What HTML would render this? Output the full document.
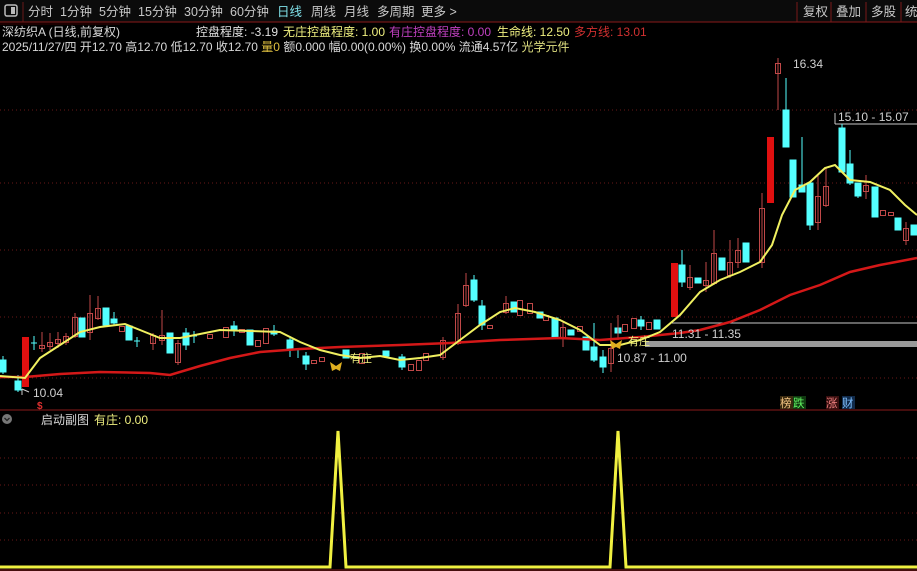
<!DOCTYPE html>
<html><head><meta charset="utf-8"><style>
html,body{margin:0;padding:0;background:#000;width:917px;height:571px;overflow:hidden}
body{font-family:"Liberation Sans","Noto Sans CJK SC",sans-serif}
svg{position:absolute;left:0;top:0}
</style></head><body>
<svg width="917" height="571" viewBox="0 0 917 571" xmlns="http://www.w3.org/2000/svg" font-family="Liberation Sans, Noto Sans CJK SC, sans-serif">
<rect width="917" height="571" fill="#000"/>
<!-- top bar -->
<rect x="0" y="0" width="917" height="22" fill="#0b0b0b"/>
<line x1="0" y1="22" x2="917" y2="22" stroke="#8a1a1a" stroke-width="1"/>
<line x1="23" y1="2" x2="23" y2="22" stroke="#6a1a1a"/>
<rect x="5" y="5" width="12" height="11" rx="2" fill="none" stroke="#bbb" stroke-width="1.5"/>
<rect x="11" y="7" width="4" height="7" fill="#bbb"/>
<g font-size="12.5" fill="#c8c8c8">
<text x="28" y="16">分时</text><text x="60" y="16">1分钟</text><text x="99" y="16">5分钟</text>
<text x="138" y="16">15分钟</text><text x="184" y="16">30分钟</text><text x="230" y="16">60分钟</text>
<text x="277" y="16" fill="#7fe0e8">日线</text><text x="311" y="16">周线</text><text x="344" y="16">月线</text>
<text x="377" y="16">多周期</text><text x="421" y="16">更多 &gt;</text>
<text x="803" y="16">复权</text><text x="836" y="16">叠加</text><text x="871" y="16">多股</text><text x="905" y="16">统</text>
</g>
<g stroke="#7a1a1a"><line x1="797" y1="2" x2="797" y2="22"/><line x1="831" y1="2" x2="831" y2="22"/><line x1="866" y1="2" x2="866" y2="22"/><line x1="901" y1="2" x2="901" y2="22"/></g>
<!-- info rows -->
<g font-size="12">
<text x="2" y="36" fill="#d8d8d8">深纺织A (日线,前复权)</text>
<text x="196" y="36" fill="#e0e0e0">控盘程度: -3.19</text>
<text x="283" y="36" fill="#f0f080">无庄控盘程度: 1.00</text>
<text x="389" y="36" fill="#c040c0">有庄控盘程度: 0.00</text>
<text x="497" y="36" fill="#f0f080">生命线: 12.50</text>
<text x="574" y="36" fill="#d03030">多方线: 13.01</text>
<text x="2" y="51" fill="#d8d8d8">2025/11/27/四 开12.70 高12.70 低12.70 收12.70 <tspan fill="#e0c040">量0</tspan> 额0.000 幅0.00(0.00%) 换0.00% 流通4.57亿 <tspan fill="#e0e080">光学元件</tspan></text>
</g>
<line x1="0" y1="24" x2="120" y2="24" stroke="#300" />
<!-- grid -->
<g stroke="#6a1818" stroke-dasharray="1,3">
<line x1="0" y1="110" x2="917" y2="110"/><line x1="0" y1="183" x2="917" y2="183"/><line x1="0" y1="250" x2="917" y2="250"/>
<line x1="0" y1="317" x2="917" y2="317"/><line x1="0" y1="378" x2="917" y2="378"/>
<line x1="0" y1="458" x2="917" y2="458"/><line x1="0" y1="485" x2="917" y2="485"/><line x1="0" y1="513" x2="917" y2="513"/><line x1="0" y1="540" x2="917" y2="540"/>
</g>
<line x1="0" y1="410" x2="917" y2="410" stroke="#8a1a1a"/>
<line x1="0" y1="570" x2="917" y2="570" stroke="#8a1a1a"/>
<!-- bands -->
<rect x="645" y="341" width="272" height="6" fill="#9a9a9a"/>
<line x1="672" y1="323" x2="917" y2="323" stroke="#c8c8c8"/>
<line x1="835" y1="124" x2="917" y2="124" stroke="#c8c8c8"/>
<line x1="835" y1="113" x2="835" y2="124" stroke="#c8c8c8"/>
<!-- candles: down cyan -->
<g stroke="#54ffff" fill="#54ffff">
<line x1="3" y1="356" x2="3" y2="374"/><rect x="0" y="360" width="6" height="12"/>
<line x1="18" y1="375" x2="18" y2="392"/><rect x="15" y="381" width="6" height="9"/>
<line x1="34" y1="336" x2="34" y2="350"/><line x1="31" y1="343" x2="37" y2="343"/>
<rect x="79" y="318" width="6" height="19"/><rect x="103" y="308" width="6" height="17"/>
<rect x="111" y="319" width="6" height="4"/><line x1="114" y1="312" x2="114" y2="325"/>
<rect x="126" y="326" width="6" height="14"/><line x1="137" y1="337" x2="137" y2="347"/><line x1="134" y1="341" x2="140" y2="341"/>
<rect x="167" y="333" width="6" height="20"/><rect x="183" y="333" width="6" height="12"/><line x1="186" y1="328" x2="186" y2="350"/>
<line x1="194" y1="331" x2="194" y2="343"/><line x1="191" y1="336" x2="197" y2="336"/>
<rect x="231" y="326" width="6" height="4"/><line x1="234" y1="321" x2="234" y2="336"/>
<rect x="247" y="330" width="6" height="15"/><rect x="271" y="331" width="6" height="3"/><line x1="274" y1="325" x2="274" y2="336"/>
<rect x="287" y="340" width="6" height="10"/><line x1="290" y1="336" x2="290" y2="357"/><line x1="298" y1="350" x2="298" y2="358"/>
<rect x="303" y="356" width="6" height="8"/><line x1="306" y1="352" x2="306" y2="370"/>
<rect x="343" y="350" width="6" height="8"/><rect x="383" y="351" width="6" height="5"/>
<rect x="399" y="357" width="6" height="10"/><line x1="402" y1="354" x2="402" y2="370"/>
<rect x="471" y="280" width="6" height="20"/><line x1="474" y1="275" x2="474" y2="302"/>
<rect x="479" y="306" width="6" height="19"/><line x1="482" y1="300" x2="482" y2="330"/>
<rect x="511" y="302" width="6" height="10"/><rect x="537" y="312" width="6" height="6"/>
<rect x="552" y="318" width="6" height="19"/><rect x="568" y="330" width="6" height="5"/>
<rect x="583" y="337" width="6" height="13"/><rect x="591" y="347" width="6" height="13"/><line x1="594" y1="323" x2="594" y2="362"/>
<rect x="600" y="357" width="6" height="10"/><line x1="603" y1="350" x2="603" y2="373"/>
<rect x="615" y="328" width="6" height="5"/><rect x="638" y="320" width="6" height="6"/><line x1="641" y1="316" x2="641" y2="330"/>
<rect x="654" y="320" width="6" height="9"/>
<rect x="679" y="265" width="6" height="17"/><line x1="682" y1="250" x2="682" y2="287"/>
<rect x="695" y="278" width="6" height="5"/><rect x="719" y="258" width="6" height="12"/>
<rect x="743" y="243" width="6" height="19"/>
<rect x="783" y="110" width="6" height="37"/><line x1="786" y1="78" x2="786" y2="147"/>
<rect x="790" y="160" width="6" height="37"/><rect x="799" y="185" width="6" height="7"/><line x1="802" y1="137" x2="802" y2="192"/>
<rect x="807" y="183" width="6" height="42"/><line x1="810" y1="183" x2="810" y2="230"/>
<rect x="839" y="128" width="6" height="44"/><line x1="842" y1="124" x2="842" y2="172"/>
<rect x="847" y="164" width="6" height="19"/><line x1="850" y1="150" x2="850" y2="185"/>
<rect x="855" y="183" width="6" height="13"/><line x1="858" y1="183" x2="858" y2="198"/>
<rect x="872" y="187" width="6" height="30"/><rect x="895" y="218" width="6" height="12"/><rect x="911" y="225" width="6" height="10"/>
</g>
<!-- up candles hollow -->
<g stroke="#c04848" fill="none">
<line x1="42" y1="332" x2="42" y2="352"/><rect x="39.5" y="345.5" width="5" height="3"/>
<line x1="50" y1="333" x2="50" y2="350"/><rect x="47.5" y="342.5" width="5" height="4"/>
<line x1="58" y1="332" x2="58" y2="348"/><rect x="55.5" y="339.5" width="5" height="4"/>
<line x1="66" y1="333" x2="66" y2="345"/><rect x="63.5" y="336.5" width="5" height="6"/>
<line x1="75" y1="313" x2="75" y2="338"/><rect x="72.5" y="317.5" width="5" height="19"/>
<line x1="90" y1="295" x2="90" y2="340"/><rect x="87.5" y="313.5" width="5" height="19"/>
<line x1="98" y1="296" x2="98" y2="320"/><rect x="95.5" y="308.5" width="5" height="10"/>
<rect x="119.5" y="326.5" width="5" height="5"/>
<line x1="153" y1="333" x2="153" y2="350"/><rect x="150.5" y="335.5" width="5" height="8"/>
<line x1="162" y1="310" x2="162" y2="345"/><rect x="159.5" y="335.5" width="5" height="5"/>
<line x1="178" y1="340" x2="178" y2="365"/><rect x="175.5" y="343.5" width="5" height="19"/>
<rect x="207.5" y="334.5" width="5" height="4"/><rect x="223.5" y="327.5" width="5" height="10"/>
<rect x="239.5" y="329.5" width="5" height="3"/><rect x="255.5" y="340.5" width="5" height="6"/><rect x="263.5" y="328.5" width="5" height="15"/>
<rect x="311.5" y="360.5" width="5" height="3"/><rect x="319.5" y="357.5" width="5" height="4"/>
<rect x="359.5" y="353.5" width="5" height="10"/><rect x="408.5" y="364.5" width="5" height="6"/>
<rect x="416.5" y="360.5" width="5" height="10"/><rect x="423.5" y="353.5" width="5" height="7"/>
<line x1="443" y1="337" x2="443" y2="360"/><rect x="440.5" y="340.5" width="5" height="17"/>
<line x1="458" y1="304" x2="458" y2="345"/><rect x="455.5" y="313.5" width="5" height="30"/>
<line x1="466" y1="273" x2="466" y2="307"/><rect x="463.5" y="285.5" width="5" height="20"/>
<rect x="487.5" y="325.5" width="5" height="3"/>
<line x1="506" y1="296" x2="506" y2="314"/><rect x="503.5" y="303.5" width="5" height="9"/>
<rect x="517.5" y="300.5" width="5" height="15"/><rect x="527.5" y="303.5" width="5" height="10"/>
<rect x="543.5" y="315.5" width="5" height="5"/>
<line x1="563" y1="322" x2="563" y2="347"/><rect x="560.5" y="327.5" width="5" height="10"/>
<rect x="577.5" y="326.5" width="5" height="5"/>
<line x1="611" y1="323" x2="611" y2="372"/><rect x="608.5" y="348.5" width="5" height="15"/>
<line x1="618" y1="315" x2="618" y2="340"/><rect x="622.5" y="324.5" width="5" height="7"/>
<rect x="631.5" y="318.5" width="5" height="10"/><rect x="646.5" y="322.5" width="5" height="7"/>
<line x1="690" y1="265" x2="690" y2="290"/><rect x="687.5" y="277.5" width="5" height="10"/>
<line x1="706" y1="262" x2="706" y2="292"/><rect x="703.5" y="280.5" width="5" height="5"/>
<line x1="714" y1="230" x2="714" y2="285"/><rect x="711.5" y="253.5" width="5" height="30"/>
<line x1="730" y1="240" x2="730" y2="278"/><rect x="727.5" y="262.5" width="5" height="13"/>
<line x1="738" y1="238" x2="738" y2="268"/><rect x="735.5" y="250.5" width="5" height="12"/>
<line x1="762" y1="193" x2="762" y2="268"/><rect x="759.5" y="208.5" width="5" height="54"/>
<line x1="778" y1="58" x2="778" y2="110"/><rect x="775.5" y="63.5" width="5" height="10"/>
<line x1="818" y1="174" x2="818" y2="230"/><rect x="815.5" y="196.5" width="5" height="26"/>
<line x1="826" y1="168" x2="826" y2="207"/><rect x="823.5" y="186.5" width="5" height="19"/>
<line x1="866" y1="175" x2="866" y2="199"/><rect x="863.5" y="185.5" width="5" height="6"/>
<rect x="880.5" y="210.5" width="5" height="5"/><rect x="888.5" y="212.5" width="5" height="3"/>
<line x1="906" y1="222" x2="906" y2="245"/><rect x="903.5" y="228.5" width="5" height="12"/>
</g>
<!-- solid red -->
<g fill="#e01010"><rect x="22" y="337" width="7" height="50"/><rect x="671" y="263" width="7" height="54"/><rect x="767" y="137" width="7" height="66"/></g>
<!-- MAs -->
<polyline fill="none" stroke="#d41818" stroke-width="2.5" points="0,377 25,377 60,374 100,372 150,373 170,375 200,366 230,358 260,352 300,349 340,347 400,345 450,343 500,340 560,338 600,340 640,337 680,333 700,330 730,322 760,310 790,295 820,285 850,272 880,265 917,258"/>
<polyline fill="none" stroke="#f0f060" stroke-width="2" points="0,376 25,378 40,358 60,345 80,332 100,327 125,324 140,330 160,338 180,338 200,334 220,330 250,331 280,332 300,342 320,350 340,355 360,358 380,356 400,360 420,358 440,355 460,340 480,325 500,312 515,308 535,312 560,320 580,330 600,345 620,345 640,340 660,332 680,315 700,292 720,280 740,272 760,262 772,245 782,215 795,190 810,182 825,168 835,165 850,180 870,182 890,190 905,205 917,215"/>
<!-- labels -->
<g font-size="12" fill="#d0d0d0">
<text x="33" y="397">10.04</text><text x="793" y="68">16.34</text><text x="838" y="121">15.10 - 15.07</text>
<text x="672" y="338">11.31 - 11.35</text><text x="617" y="362">10.87 - 11.00</text>
</g>
<path d="M29 392 L22 389 M22 389 L22 395" stroke="#ccc" fill="none"/>
<text x="37" y="409" font-size="10" font-weight="bold" fill="#e03030">$</text>
<path d="M330 362 l6 4 l6 -4 l-2 9 l-4 -2 l-4 2z" fill="#e0b020"/>
<path d="M610 340 l6 4 l6 -4 l-2 9 l-4 -2 l-4 2z" fill="#e0b020"/>
<text x="350" y="362" font-size="11" fill="#f0f080">有庄</text>
<text x="628" y="345" font-size="11" fill="#f0f080">有庄</text>
<!-- tags -->
<rect x="780" y="396" width="13" height="13" fill="#3a2a10"/><text x="780" y="407" font-size="11.5" fill="#f0c080">榜</text>
<rect x="793" y="396" width="13" height="13" fill="#103a10"/><text x="793" y="407" font-size="11.5" fill="#60f060">跌</text>
<rect x="826" y="396" width="13" height="13" fill="#3a1010"/><text x="826" y="407" font-size="11.5" fill="#f08080">涨</text>
<rect x="842" y="396" width="13" height="13" fill="#102a4a"/><text x="842" y="407" font-size="11.5" fill="#80c0ff">财</text>
<!-- sub panel -->
<circle cx="7" cy="419" r="5" fill="#777"/><path d="M4.5 418 L7 420.5 L9.5 418" stroke="#222" fill="none" stroke-width="1.3"/>
<text x="41" y="424" font-size="12" fill="#d8d8d8">启动副图</text>
<text x="94" y="424" font-size="12" fill="#f0f080">有庄: 0.00</text>
<polyline fill="none" stroke="#f0f040" stroke-width="3" points="0,567 330,567 338,431 346,567 610,567 618,431 626,567 917,567"/>
</svg>
</body></html>
